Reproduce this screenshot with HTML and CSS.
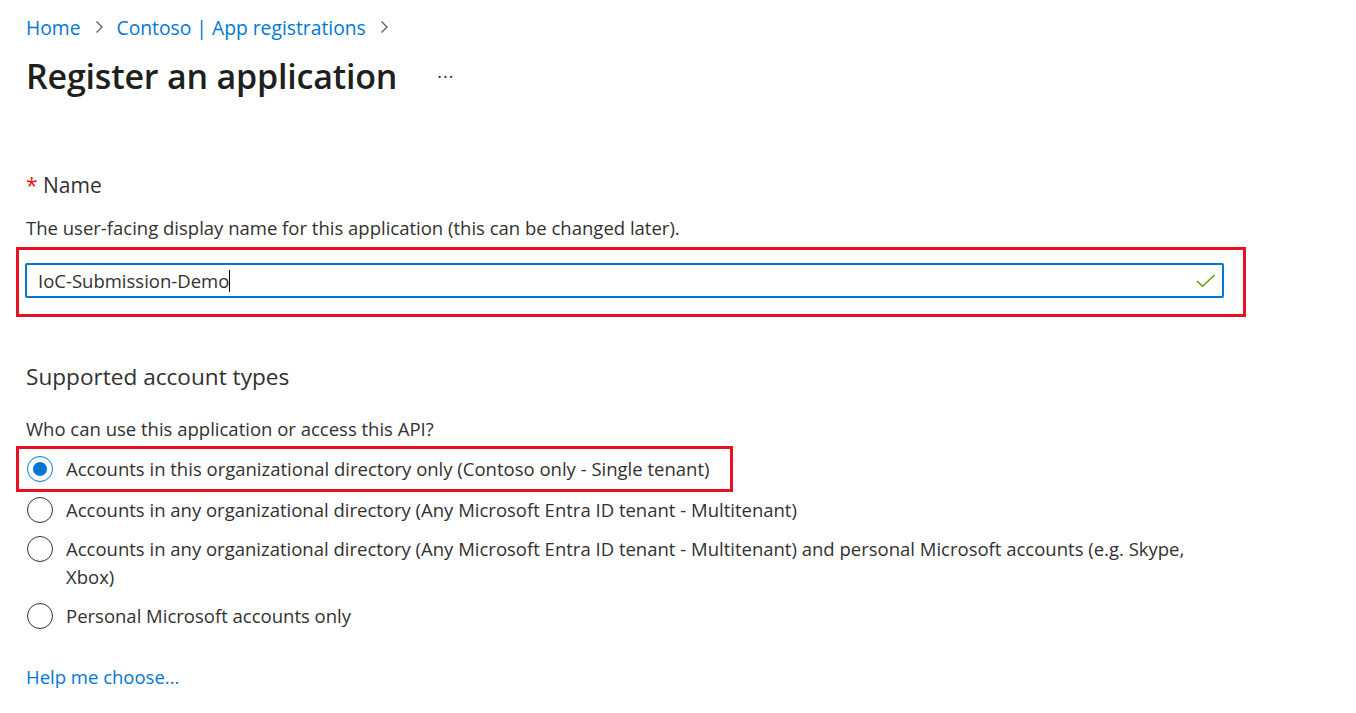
FILE: index.html
```html
<!DOCTYPE html>
<html lang="en">
<head>
<meta charset="utf-8">
<title>Register an application</title>
<link rel="stylesheet" href="styles.css">
</head>
<body>
<div class="page">
  <nav class="breadcrumb">
    <a class="crumb" href="#">Home</a>
    <span class="sep"><svg width="12" height="14" viewBox="0 0 12 14"><path d="M3.5 1.5 L9 7 L3.5 12.5" fill="none" stroke="#605e5c" stroke-width="1.3"/></svg></span>
    <a class="crumb" href="#">Contoso | App registrations</a>
    <span class="sep"><svg width="12" height="14" viewBox="0 0 12 14"><path d="M3.5 1.5 L9 7 L3.5 12.5" fill="none" stroke="#605e5c" stroke-width="1.3"/></svg></span>
  </nav>
  <div class="title-row">
    <h1 class="title">Register an application</h1>
    <span class="more">···</span>
  </div>

  <section class="section name-section">
    <h2 class="heading"><span class="req">*</span> Name</h2>
    <p class="desc">The user-facing display name for this application (this can be changed later).</p>
    <div class="highlight highlight-input">
      <div class="input">
        <span class="input-text">IoC-Submission-Demo</span><span class="caret"></span>
        <svg class="check" width="20" height="14" viewBox="0 0 20 14"><path d="M1 7 L6.5 12.3 L18.5 1" fill="none" stroke="#57a300" stroke-width="1.5"/></svg>
      </div>
    </div>
  </section>

  <section class="section accounts-section">
    <h2 class="heading">Supported account types</h2>
    <p class="desc question">Who can use this application or access this API?</p>
    <div class="highlight highlight-radio">
      <div class="option">
        <span class="radio checked"></span>
        <span class="label">Accounts in this organizational directory only (Contoso only - Single tenant)</span>
      </div>
    </div>
    <div class="option">
      <span class="radio"></span>
      <span class="label">Accounts in any organizational directory (Any Microsoft Entra ID tenant - Multitenant)</span>
    </div>
    <div class="option">
      <span class="radio"></span>
      <span class="label">Accounts in any organizational directory (Any Microsoft Entra ID tenant - Multitenant) and personal Microsoft accounts (e.g. Skype, Xbox)</span>
    </div>
    <div class="option">
      <span class="radio"></span>
      <span class="label">Personal Microsoft accounts only</span>
    </div>
    <a class="help" href="#">Help me choose...</a>
  </section>
</div>
</body>
</html>
```

FILE: styles.css
```css
html, body {
  margin: 0;
  padding: 0;
  background: #ffffff;
}

body {
  font-family: "Open Sans", "Noto Sans", sans-serif;
  color: #323130;
  font-size: 18.5px;
}

.page {
  padding: 12px 0 0 26px;
}

.breadcrumb {
  display: flex;
  align-items: center;
  height: 30px;
  gap: 12px;
}

.crumb {
  color: #0078d4;
  text-decoration: none;
  font-size: 19.3px;
}

.sep {
  display: flex;
  align-items: center;
}

.title-row {
  display: flex;
  align-items: center;
  margin-top: 13px;
  height: 42px;
}

.title {
  margin: 0;
  font-size: 34px;
  font-weight: 600;
  color: #201f1e;
  letter-spacing: -0.2px;
}

.more {
  margin-left: 40px;
  font-size: 18px;
  color: #323130;
  letter-spacing: 1px;
}

.section {
  display: flex;
  flex-direction: column;
  align-items: flex-start;
}

.name-section {
  margin-top: 74px;
}

.heading {
  margin: 0;
  font-size: 21px;
  font-weight: 400;
  line-height: 28px;
  color: #323130;
}

.accounts-section .heading {
  font-size: 22.6px;
}

.req {
  color: #e81123;
}

.desc {
  margin: 15px 0 0 0;
  line-height: 28px;
}

.highlight {
  border: 3px solid #e81123;
  box-sizing: border-box;
  margin-left: -10px;
}

.highlight-input {
  width: 1230px;
  margin-top: 5px;
  padding: 13px 19px 16px 6px;
}

.input {
  display: flex;
  align-items: center;
  height: 35px;
  box-sizing: border-box;
  border: 2px solid #0078d4;
  border-radius: 2px;
  padding: 0 6px 0 11px;
}

.input-text {
  color: #323130;
}

.caret {
  width: 1px;
  height: 22px;
  background: #000;
}

.check {
  margin-left: auto;
}

.accounts-section {
  margin-top: 46px;
}

.question {
  margin-top: 24px;
}

.highlight-radio {
  width: 717px;
  margin-top: 3px;
  padding: 0 0 0 8px;
  height: 46px;
  display: flex;
  align-items: center;
}

.option {
  display: flex;
  align-items: flex-start;
  gap: 13px;
  line-height: 28px;
  max-width: 1189px;
  margin-top: 11px;
  padding-left: 1px;
}

.highlight-radio .option {
  margin-top: 0;
  padding-left: 0;
}

.highlight-radio + .option {
  margin-top: 4px;
}

.radio {
  flex: none;
  width: 26px;
  height: 26px;
  box-sizing: border-box;
  border: 1.5px solid #323130;
  border-radius: 50%;
  margin-top: 1px;
  position: relative;
}

.radio.checked {
  border-color: #0078d4;
}

.radio.checked::after {
  content: "";
  position: absolute;
  left: 50%;
  top: 50%;
  width: 14px;
  height: 14px;
  margin: -7px 0 0 -7px;
  border-radius: 50%;
  background: #0078d4;
}

.help {
  margin-top: 34px;
  color: #0078d4;
  text-decoration: none;
}
```
